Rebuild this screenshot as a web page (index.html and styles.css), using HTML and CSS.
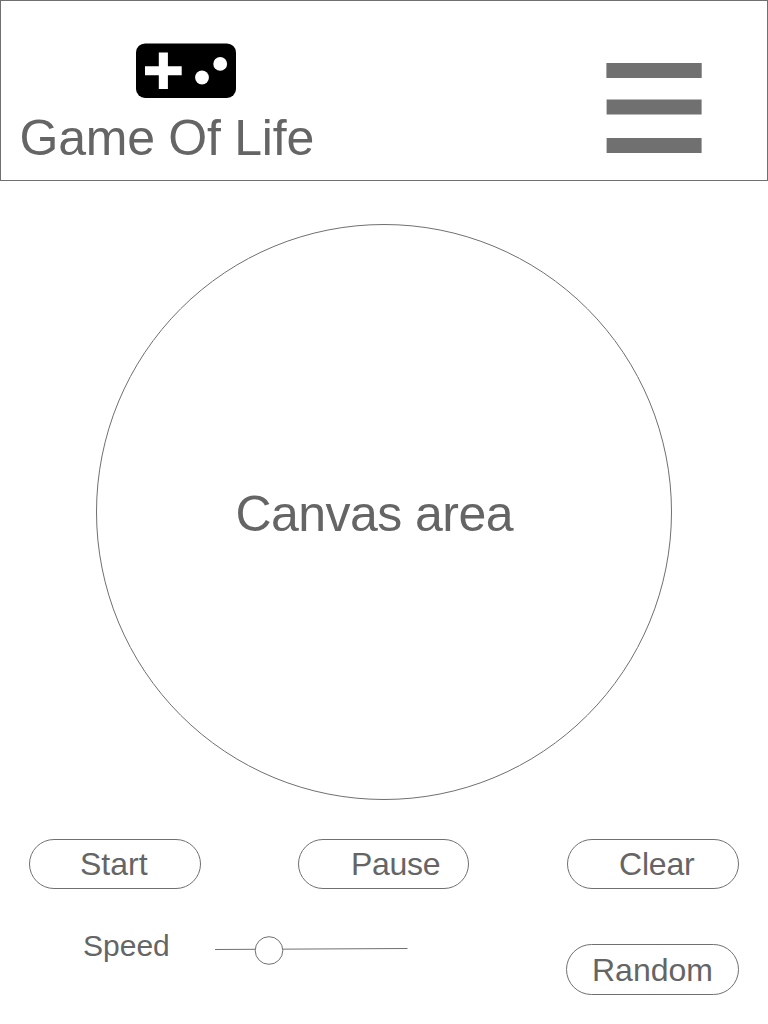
FILE: index.html
```html
<!DOCTYPE html>
<html lang="en">
<head>
<meta charset="utf-8">
<title>Game Of Life</title>
<link rel="stylesheet" href="styles.css">
</head>
<body>
<header class="header">
  <div class="brand">
    <svg class="logo" width="100" height="55" viewBox="0 0 100 55" aria-hidden="true">
      <rect y="0.4" width="100" height="54.6" rx="9.1"/>
      <path class="cutout" d="M22.8 9.4h9.1v13.8h13.8v9.1H31.9V46h-9.1V32.3H9v-9.1h13.8z"/>
      <circle class="cutout" cx="66" cy="34.5" r="6.9"/>
      <circle class="cutout" cx="84.2" cy="20.9" r="6.9"/>
    </svg>
    <h1 class="title">Game Of Life</h1>
  </div>
  <svg class="menu" width="98" height="92" viewBox="0 0 98 92" role="img" aria-label="Menu">
    <rect x="0.4" y="1" width="95.3" height="15"/>
    <rect x="0.6" y="37.5" width="95" height="15"/>
    <rect x="0.6" y="76" width="95" height="15"/>
  </svg>
</header>
<main>
  <section class="canvas"><span class="canvas-label">Canvas area</span></section>
  <section class="controls">
    <button class="button start">Start</button>
    <button class="button pause">Pause</button>
    <button class="button clear">Clear</button>
  </section>
  <section class="options">
    <span class="speed">Speed</span>
    <svg class="slider" width="194" height="30" viewBox="0 0 194 30" role="img" aria-label="Speed slider">
      <path d="M0 14.5L192.5 13.5"/>
      <circle cx="54" cy="15.5" r="13.8"/>
    </svg>
    <button class="button random">Random</button>
  </section>
</main>
</body>
</html>
```
FILE: styles.css
```css
* {
  box-sizing: border-box;
}

body {
  margin: 0;
  width: 768px;
  height: 1024px;
  overflow: hidden;
  background: #fff;
  color: #656565;
  font-family: "Liberation Sans", Arial, sans-serif;
}

.header {
  display: flex;
  justify-content: space-between;
  align-items: flex-start;
  height: 181px;
  padding: 42px 63px 0 17px;
  border: 1px solid #707070;
}

.brand {
  width: 310px;
}

.logo {
  display: block;
  margin-left: 118px;
}

.cutout {
  fill: #fff;
}

.title {
  margin: 10px 0 0 1.5px;
  font-size: 50px;
  font-weight: 400;
  line-height: 60px;
  letter-spacing: -0.24px;
  white-space: nowrap;
}

.menu {
  display: block;
  margin-top: 19px;
  fill: #707070;
}

.canvas {
  width: 576px;
  height: 576px;
  margin: 43px auto 0;
  padding: 259px 0 0 138.5px;
  border: 1px solid #707070;
  border-radius: 50%;
}

.canvas-label {
  display: block;
  font-size: 50px;
  line-height: 60px;
  letter-spacing: -0.55px;
}

.controls {
  display: flex;
  justify-content: space-between;
  margin: 39px 29px 0;
}

.button {
  width: 172px;
  height: 50px;
  border: 1px solid #707070;
  border-radius: 25px;
  background: #fff;
  color: inherit;
  font: 32px/48px "Liberation Sans", Arial, sans-serif;
  text-align: left;
}

.start {
  padding: 0 0 0 50px;
}

.pause {
  width: 171px;
  margin-right: 1px;
  padding: 0 0 0 52px;
  letter-spacing: -0.3px;
}

.clear {
  padding: 0 0 0 51px;
  letter-spacing: -0.2px;
}

.options {
  display: flex;
  align-items: flex-start;
  margin: 46px 29px 0 83px;
}

.speed {
  width: 132px;
  margin-top: -7px;
  font-size: 30px;
  line-height: 36px;
}

.slider {
  fill: #fff;
  stroke: #707070;
}

.random {
  width: 173px;
  height: 51px;
  margin: 9px 0 0 auto;
  padding: 0 0 0 25px;
  border-radius: 26px;
}
```
